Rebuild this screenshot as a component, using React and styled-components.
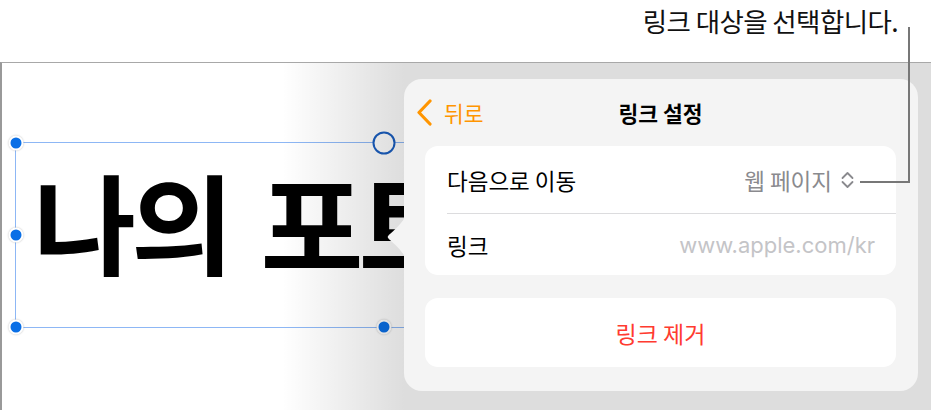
import React from 'react'
import styled, { createGlobalStyle } from 'styled-components'

const GlobalStyle = createGlobalStyle`
  html, body {
    margin: 0;
    padding: 0;
    background: #fff;
  }
  body {
    font-family: "Noto Sans CJK KR", "Noto Sans", sans-serif;
  }
`

const Page = styled.div`
  position: relative;
  width: 931px;
  height: 410px;
  overflow: hidden;
  display: flex;
  flex-direction: column;
  background: #fff;
`

const Annotation = styled.div`
  height: 62px;
  display: flex;
  justify-content: flex-end;
  align-items: flex-start;
  padding: 3px 33px 0 0;
  box-sizing: border-box;
`

const CalloutText = styled.div`
  font-size: 26.5px;
  line-height: 36px;
  letter-spacing: -0.6px;
  color: #111;
`

const Leader = styled.div`
  position: absolute;
  left: 860px;
  top: 27px;
  width: 48px;
  height: 154px;
  border-right: 2px solid #777;
  border-bottom: 2px solid #777;
`

const Screen = styled.div`
  position: relative;
  flex: 1;
  border-top: 1px solid #a8a8a8;
  border-left: 2px solid #999;
  overflow: hidden;
`

const Canvas = styled.div`
  padding: 79px 0 0 13px;
`

const SelectionBox = styled.div`
  position: relative;
  width: 738px;
  height: 186px;
  box-sizing: border-box;
  border: 1.5px solid #8db7f5;
`

const Handle = styled.span`
  position: absolute;
  left: ${p => p.$x}%;
  top: ${p => p.$y}%;
  transform: translate(-50%, -50%);
  box-sizing: border-box;
  border-radius: 50%;
  ${p => p.$hollow ? `
    width: 23px;
    height: 23px;
    background: #fff;
    border: 2.5px solid #1a5ec0;
  ` : `
    width: 15px;
    height: 15px;
    background: #0a6fe6;
    border: 2.5px solid #fff;
    box-shadow: 0 0 2px rgba(0, 0, 0, 0.25);
  `}
`

/* the title runs on under the popover; clip it at the popover's edge */
const BigTitle = styled.div`
  width: 371px;
  overflow: hidden;
  margin: 22px 0 0 17px;
  font-size: 112px;
  font-weight: 700;
  line-height: 1;
  letter-spacing: -5px;
  word-spacing: 11px;
  white-space: nowrap;
  color: #000;
`

const Dim = styled.div`
  position: absolute;
  inset: 0;
  background: linear-gradient(90deg, rgba(0, 0, 0, 0) 280px, rgba(0, 0, 0, 0.135) 402px);
  pointer-events: none;
`

const Popover = styled.div`
  position: absolute;
  left: 402px;
  top: 16px;
  width: 514px;
  height: 312px;
  box-sizing: border-box;
  padding: 0 22px 24px 21px;
  border-radius: 18px;
  background: #f4f4f4;
  display: flex;
  flex-direction: column;
`

const Arrow = styled.svg`
  position: absolute;
  left: -17px;
  top: 138px;
`

const Header = styled.div`
  height: 67px;
  display: grid;
  grid-template-columns: 1fr auto 1fr;
  align-items: center;
`

const BackButton = styled.button`
  justify-self: start;
  display: flex;
  align-items: center;
  gap: 12px;
  margin: 0 0 0 -9px;
  padding: 0;
  border: 0;
  background: none;
  font-family: inherit;
  font-size: 21.5px;
  color: #ff9500;
`

const Title = styled.div`
  font-size: 21.5px;
  font-weight: 700;
  color: #000;
`

const Card = styled.div`
  background: #fff;
  border-radius: 13px;
  overflow: hidden;
`

const Row = styled.div`
  height: ${p => p.$h}px;
  display: flex;
  align-items: center;
  justify-content: space-between;
  padding: 0 22px 0 22px;
  box-sizing: border-box;
  font-size: 22.5px;
  color: #000;
  & + & {
    border-top: 1px solid #dcdcde;
    margin-left: 22px;
    padding-left: 0;
  }
`

const Label = styled.span`
  white-space: nowrap;
`

const Value = styled.span`
  display: flex;
  align-items: center;
  gap: 8px;
  margin-right: 19px;
  color: #8a8a8e;
`

const Placeholder = styled.span`
  font-family: Inter, "Noto Sans", sans-serif;
  font-size: 22px;
  color: #c4c4c7;
  margin-right: -1px;
`

const DangerButton = styled.button`
  margin-top: 23px;
  height: 69px;
  border: 0;
  border-radius: 13px;
  background: #fff;
  font-family: inherit;
  font-size: 23px;
  color: #ff3b30;
`

const ChevronLeft = () => (
  <svg width="16" height="27" viewBox="0 0 16 27" fill="none">
    <path d="M14 2 L3 13.5 L14 25" stroke="#ff9500" strokeWidth="3.2" strokeLinecap="round" strokeLinejoin="round" />
  </svg>
)

const UpDown = () => (
  <svg width="15" height="18" viewBox="0 0 15 18" fill="none">
    <path d="M2.5 7 L7.5 2 L12.5 7 M2.5 11 L7.5 16 L12.5 11" stroke="#8a8a8e" strokeWidth="1.8" strokeLinecap="round" strokeLinejoin="round" />
  </svg>
)

const handles = [
  { x: 0, y: 0 },
  { x: 0, y: 50 },
  { x: 0, y: 100 },
  { x: 50, y: 100 },
  { x: 50, y: 0, hollow: true },
]

export default function App() {
  return (
    <>
      <GlobalStyle />
      <Page>
        <Annotation>
          <CalloutText>링크 대상을 선택합니다.</CalloutText>
        </Annotation>
        <Screen>
          <Canvas>
            <SelectionBox>
              <BigTitle>나의 포트폴리오</BigTitle>
              {handles.map((h, i) => (
                <Handle key={i} $x={h.x} $y={h.y} $hollow={h.hollow} />
              ))}
            </SelectionBox>
          </Canvas>
          <Dim />
          <Popover>
            <Arrow width="18" height="40" viewBox="0 0 18 40">
              <path d="M18 0 C16 4 12 9 3 17 C0 19.5 0 20.5 3 23 C12 31 16 36 18 40 Z" fill="#f4f4f4" />
            </Arrow>
            <Header>
              <BackButton>
                <ChevronLeft />
                뒤로
              </BackButton>
              <Title>링크 설정</Title>
            </Header>
            <Card>
              <Row $h={67}>
                <Label>다음으로 이동</Label>
                <Value>
                  웹 페이지
                  <UpDown />
                </Value>
              </Row>
              <Row $h={62}>
                <Label>링크</Label>
                <Placeholder>www.apple.com/kr</Placeholder>
              </Row>
            </Card>
            <DangerButton>링크 제거</DangerButton>
          </Popover>
        </Screen>
        <Leader />
      </Page>
    </>
  )
}
